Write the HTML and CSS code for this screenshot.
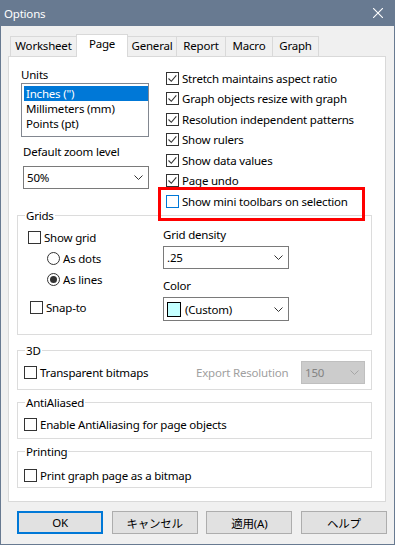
FILE: index.html
```html
<!DOCTYPE html>
<html lang="en">
<head>
    <meta charset="UTF-8">
    <title>Options</title>
    <link rel="stylesheet" href="styles.css">
</head>
<body>
<div class="window">
    <div class="titlebar">
        <span class="title">Options</span>
        <svg class="close" width="10" height="10" viewBox="0 0 10 10"><path d="M0 0L10 10M10 0L0 10" stroke="#fff" stroke-width="1.1" fill="none"/></svg>
    </div>
    <div class="client">
        <div class="tabs">
            <div class="tab">Worksheet</div>
            <div class="tab active">Page</div>
            <div class="tab">General</div>
            <div class="tab">Report</div>
            <div class="tab">Macro</div>
            <div class="tab">Graph</div>
        </div>
        <div class="panel">
            <div class="top">
                <div class="left-col">
                    <div class="label">Units</div>
                    <div class="listbox">
                        <div class="item selected">Inches (&quot;)</div>
                        <div class="item">Millimeters (mm)</div>
                        <div class="item">Points (pt)</div>
                    </div>
                    <div class="label zoom-label">Default zoom level</div>
                    <div class="select zoom-select">
                        <span>50%</span>
                        <svg width="9" height="5" viewBox="0 0 9 5"><path d="M.5.5l4 4 4-4" stroke="#333" fill="none"/></svg>
                    </div>
                </div>
                <div class="right-col">
                    <div class="check">
                        <svg class="box" width="13" height="13" viewBox="0 0 13 13"><rect x=".5" y=".5" width="12" height="12" fill="#fff" stroke="#333"/><path d="M2.5 6.5l2.8 2.8 5-6" fill="none" stroke="#333" stroke-width="1.1"/></svg>
                        <span>Stretch maintains aspect ratio</span>
                    </div>
                    <div class="check">
                        <svg class="box" width="13" height="13" viewBox="0 0 13 13"><rect x=".5" y=".5" width="12" height="12" fill="#fff" stroke="#333"/><path d="M2.5 6.5l2.8 2.8 5-6" fill="none" stroke="#333" stroke-width="1.1"/></svg>
                        <span>Graph objects resize with graph</span>
                    </div>
                    <div class="check">
                        <svg class="box" width="13" height="13" viewBox="0 0 13 13"><rect x=".5" y=".5" width="12" height="12" fill="#fff" stroke="#333"/><path d="M2.5 6.5l2.8 2.8 5-6" fill="none" stroke="#333" stroke-width="1.1"/></svg>
                        <span>Resolution independent patterns</span>
                    </div>
                    <div class="check">
                        <svg class="box" width="13" height="13" viewBox="0 0 13 13"><rect x=".5" y=".5" width="12" height="12" fill="#fff" stroke="#333"/><path d="M2.5 6.5l2.8 2.8 5-6" fill="none" stroke="#333" stroke-width="1.1"/></svg>
                        <span>Show rulers</span>
                    </div>
                    <div class="check">
                        <svg class="box" width="13" height="13" viewBox="0 0 13 13"><rect x=".5" y=".5" width="12" height="12" fill="#fff" stroke="#333"/><path d="M2.5 6.5l2.8 2.8 5-6" fill="none" stroke="#333" stroke-width="1.1"/></svg>
                        <span>Show data values</span>
                    </div>
                    <div class="check">
                        <svg class="box" width="13" height="13" viewBox="0 0 13 13"><rect x=".5" y=".5" width="12" height="12" fill="#fff" stroke="#333"/><path d="M2.5 6.5l2.8 2.8 5-6" fill="none" stroke="#333" stroke-width="1.1"/></svg>
                        <span>Page undo</span>
                    </div>
                    <div class="check marked">
                        <svg class="box" width="13" height="13" viewBox="0 0 13 13"><rect x=".5" y=".5" width="12" height="12" fill="#fff" stroke="#0078d7"/></svg>
                        <span>Show mini toolbars on selection</span>
                    </div>
                </div>
            </div>

            <fieldset class="group grids">
                <legend>Grids</legend>
                <div class="grid-body">
                    <div class="grid-left">
                        <div class="check">
                            <svg class="box" width="13" height="13" viewBox="0 0 13 13"><rect x=".5" y=".5" width="12" height="12" fill="#fff" stroke="#333"/></svg>
                            <span>Show grid</span>
                        </div>
                        <div class="radio">
                            <svg class="box" width="13" height="13" viewBox="0 0 13 13"><circle cx="6.5" cy="6.5" r="6" fill="#fff" stroke="#333"/></svg>
                            <span>As dots</span>
                        </div>
                        <div class="radio">
                            <svg class="box" width="13" height="13" viewBox="0 0 13 13"><circle cx="6.5" cy="6.5" r="6" fill="#fff" stroke="#333"/><circle cx="6.5" cy="6.5" r="3.5" fill="#333"/></svg>
                            <span>As lines</span>
                        </div>
                        <div class="check snap">
                            <svg class="box" width="13" height="13" viewBox="0 0 13 13"><rect x=".5" y=".5" width="12" height="12" fill="#fff" stroke="#333"/></svg>
                            <span>Snap-to</span>
                        </div>
                    </div>
                    <div class="grid-right">
                        <div class="label">Grid density</div>
                        <div class="select density-select">
                            <span>.25</span>
                            <svg width="9" height="5" viewBox="0 0 9 5"><path d="M.5.5l4 4 4-4" stroke="#333" fill="none"/></svg>
                        </div>
                        <div class="label color-label">Color</div>
                        <div class="select color-select">
                            <span class="swatch-wrap"><span class="swatch"></span>(Custom)</span>
                            <svg width="9" height="5" viewBox="0 0 9 5"><path d="M.5.5l4 4 4-4" stroke="#333" fill="none"/></svg>
                        </div>
                    </div>
                </div>
            </fieldset>

            <fieldset class="group three-d">
                <legend>3D</legend>
                <div class="group-row">
                    <div class="check wide">
                        <svg class="box" width="13" height="13" viewBox="0 0 13 13"><rect x=".5" y=".5" width="12" height="12" fill="#fff" stroke="#333"/></svg>
                        <span>Transparent bitmaps</span>
                    </div>
                    <span class="muted">Export Resolution</span>
                    <div class="select disabled">
                        <span>150</span>
                        <svg width="9" height="5" viewBox="0 0 9 5"><path d="M.5.5l4 4 4-4" stroke="#a6a6a6" fill="none"/></svg>
                    </div>
                </div>
            </fieldset>

            <fieldset class="group anti">
                <legend>AntiAliased</legend>
                <div class="group-row">
                    <div class="check">
                        <svg class="box" width="13" height="13" viewBox="0 0 13 13"><rect x=".5" y=".5" width="12" height="12" fill="#fff" stroke="#333"/></svg>
                        <span>Enable AntiAliasing for page objects</span>
                    </div>
                </div>
            </fieldset>

            <fieldset class="group printing">
                <legend>Printing</legend>
                <div class="group-row">
                    <div class="check">
                        <svg class="box" width="13" height="13" viewBox="0 0 13 13"><rect x=".5" y=".5" width="12" height="12" fill="#fff" stroke="#333"/></svg>
                        <span>Print graph page as a bitmap</span>
                    </div>
                </div>
            </fieldset>
        </div>

        <div class="buttons">
            <button class="btn default">OK</button>
            <button class="btn">キャンセル</button>
            <button class="btn">適用(A)</button>
            <button class="btn">ヘルプ</button>
        </div>
    </div>
</div>
</body>
</html>
```

FILE: styles.css
```css
* {
    box-sizing: border-box;
}
html, body {
    margin: 0;
    padding: 0;
}
body {
    font-family: "Noto Sans", "Noto Sans CJK JP", sans-serif;
    font-size: 11.5px;
    letter-spacing: -0.2px;
    color: #000;
    background-color: #f0f0f0;
}
.window {
    width: 395px;
    height: 545px;
    border: 1px solid #687a91;
    border-top: none;
    display: flex;
    flex-direction: column;
    background-color: #f0f0f0;
}
.titlebar {
    height: 26px;
    margin: 0 -1px;
    background-color: #687a91;
    color: #fff;
    display: flex;
    align-items: center;
    justify-content: space-between;
    padding: 0 12px 0 4px;
}
.title {
    line-height: 15px;
}
.client {
    flex: 1;
    padding: 8px 8px 0 7px;
}

/* tabs */
.tabs {
    display: flex;
    align-items: flex-end;
    height: 22px;
    margin-left: 2px;
}
.tab {
    height: 20px;
    border: 1px solid #d9d9d9;
    border-bottom: none;
    margin-left: -1px;
    background-color: #f0f0f0;
    text-align: center;
    line-height: 18px;
}
.tab:first-child {
    margin-left: 0;
}
.tab:nth-child(1) { width: 67px; }
.tab:nth-child(2) { width: 52px; }
.tab:nth-child(3) { width: 50px; }
.tab:nth-child(4) { width: 50px; }
.tab:nth-child(5) { width: 48px; }
.tab:nth-child(6) { width: 47px; }
.tab.active {
    height: 23px;
    margin-bottom: -1px;
    background-color: #fff;
    position: relative;
    z-index: 1;
    line-height: 18px;
}

/* panel */
.panel {
    height: 446px;
    background-color: #fff;
    border: 1px solid #d9d9d9;
    padding: 0 13px 0 8px;
}
.top {
    display: flex;
    height: 151px;
    padding-top: 10px;
}
.left-col {
    width: 128px;
    margin-left: 4px;
}
.right-col {
    margin-left: 17px;
    padding-top: 1px;
}
.label {
    line-height: 15px;
}
.listbox {
    margin-top: 1px;
    height: 54px;
    border: 1px solid #828790;
    padding: 2px 0 0 2px;
}
.item {
    line-height: 15px;
    padding-left: 2px;
}
.item.selected {
    background-color: #0078d7;
    color: #fff;
}
.zoom-label {
    margin: 7px 0 0 2px;
}
.select {
    display: flex;
    align-items: center;
    justify-content: space-between;
    height: 23px;
    border: 1px solid #7a7a7a;
    background-color: #fff;
    padding: 0 5px 0 3px;
}
.zoom-select {
    margin: 7px 0 0 2px;
    width: 126px;
}

/* checkboxes */
.check, .radio {
    display: flex;
    align-items: center;
    height: 20px;
}
.box {
    flex-shrink: 0;
    margin-right: 3px;
}
.right-col .check {
    height: 20.5px;
}
.marked {
    position: relative;
}
.marked::after {
    content: "";
    position: absolute;
    left: -8px;
    top: -4px;
    width: 201px;
    height: 28px;
    border: 3px solid #f00;
}

/* group boxes */
.group {
    margin: 0;
    padding: 0;
    border: 1px solid #dcdcdc;
    min-width: 0;
}
.group legend {
    margin-left: 7px;
    padding: 0 1px;
    line-height: 15px;
}
.grids {
    padding: 3.5px 0 13px;
}
.grid-body {
    display: flex;
}
.grid-left {
    width: 145px;
    padding: 1px 0 0 10px;
}
.radio {
    height: 21px;
    margin-left: 19px;
}
.snap {
    margin: 8px 0 0 2px;
}
.grid-right {
    width: 126px;
}
.density-select {
    margin-top: 4.5px;
}
.color-label {
    margin-top: 8.5px;
}
.color-select {
    margin-top: 4.5px;
    height: 24px;
}
.swatch-wrap {
    display: flex;
    align-items: center;
}
.swatch {
    width: 14px;
    height: 15px;
    border: 1px solid #000;
    background-color: #c4ffff;
    margin: 0 4px 0 0;
}
.color-select {
    padding-left: 3px;
}
.group-row {
    display: flex;
    align-items: center;
    padding-left: 6px;
    padding-right: 6px;
}
.three-d {
    margin-top: 8px;
    padding: 2.5px 0 5.5px;
}
.check.wide {
    width: 172px;
}
.muted {
    color: #a0a0a0;
}
.select.disabled {
    margin-left: auto;
    width: 64px;
    background-color: #cccccc;
    border-color: #bfbfbf;
    color: #838383;
}
.anti {
    margin-top: 5px;
    padding: 4.5px 0 3.5px;
}
.printing {
    margin-top: 5px;
    padding: 6.5px 0 1.5px;
}

/* buttons */
.buttons {
    display: flex;
    justify-content: space-between;
    margin: 9px 0 0 9px;
    width: 370px;
}
.btn {
    width: 86px;
    height: 23px;
    padding: 0;
    font-family: "Noto Sans", "Noto Sans CJK JP", sans-serif;
    font-size: 11.5px;
    letter-spacing: -0.2px;
    color: #000;
    background-color: #e1e1e1;
    border: 1px solid #adadad;
}
.btn.default {
    border: 2px solid #0078d7;
}
```
